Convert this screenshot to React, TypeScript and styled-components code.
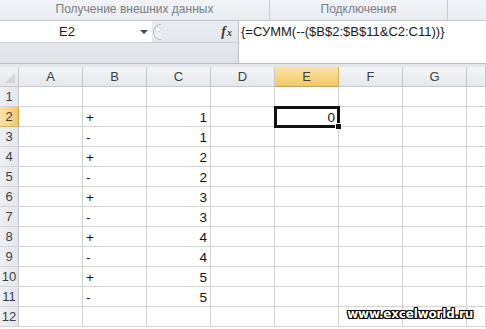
import React from "react";
import styled, { createGlobalStyle } from "styled-components";

const GlobalStyle = createGlobalStyle`
    html, body {
        margin: 0;
        padding: 0;
        background: #ffffff;
        overflow: hidden;
    }
    body {
        font-family: "Liberation Sans", Arial, sans-serif;
    }
`;

const Page = styled.div`
    position: relative;
    width: 486px;
    height: 329px;
    overflow: hidden;
    background: #e8ebef;
    display: flex;
    flex-direction: column;
`;

const Ribbon = styled.div`
    display: grid;
    grid-template-columns: 270px 178px 1fr;
    height: 21px;
    background: linear-gradient(#f1f3f6, #e9ecf1);
    border-bottom: 1px solid #c2c7ce;
    box-sizing: border-box;
`;

const RibbonGroup = styled.div<{ $last?: boolean }>`
    display: flex;
    align-items: center;
    justify-content: center;
    font-size: 12px;
    color: #7a7e84;
    border-right: ${p => (p.$last ? "none" : "1px solid #c8ccd2")};
    padding-bottom: 2px;
`;

const FormulaBar = styled.div`
    display: grid;
    grid-template-columns: 239px 1fr;
    height: 43px;
    border-bottom: 1px solid #b9bec6;
    box-sizing: border-box;
`;

const LeftBar = styled.div`
    display: flex;
    flex-direction: column;
    background: linear-gradient(#e9ecf0, #dfe3e8);
    border-right: 1px solid #b9bec6;
`;

const NameRow = styled.div`
    display: flex;
    align-items: center;
    height: 21px;
    border-bottom: 1px solid #c9cdd3;
`;

const NameBox = styled.div`
    position: relative;
    width: 152px;
    height: 100%;
    background: #ffffff;
    display: flex;
    align-items: center;
    justify-content: center;
    font-size: 13px;
    color: #222;
    padding-right: 18px;
    box-sizing: border-box;
`;

const DropArrow = styled.span`
    position: absolute;
    right: 4px;
    top: 9px;
    width: 0;
    height: 0;
    border-left: 4px solid transparent;
    border-right: 4px solid transparent;
    border-top: 4px solid #444;
`;

const Grip = styled.div`
    width: 12px;
    height: 20px;
    margin-left: -2px;
    display: flex;
    align-items: center;
`;

const FxArea = styled.div`
    flex: 1;
    display: flex;
    align-items: baseline;
    justify-content: flex-end;
    padding-right: 6px;
    font-family: "Liberation Serif", serif;
    font-style: italic;
    font-weight: bold;
    font-size: 14px;
    color: #3a3a3a;
`;

const FxSub = styled.span`
    font-size: 10px;
    margin-left: 1px;
`;

const FormulaBox = styled.div`
    background: #ffffff;
    font-size: 13px;
    color: #1a1a1a;
    padding: 3px 0 0 2px;
    white-space: nowrap;
`;

const Gap = styled.div`
    height: 3px;
    background: #e3e6ea;
`;

const Sheet = styled.div`
    position: relative;
    display: grid;
    grid-template-columns: 19px repeat(7, 64px) 1fr;
    grid-auto-rows: 20px;
    background: #ffffff;
    flex: 1;
`;

const Corner = styled.div`
    position: relative;
    background: linear-gradient(#f3f4f6, #e3e6ea);
    border-right: 1px solid #c5c9cf;
    border-bottom: 1px solid #c5c9cf;
    box-sizing: border-box;
    &::after {
        content: "";
        position: absolute;
        right: 3px;
        bottom: 3px;
        width: 0;
        height: 0;
        border-left: 10px solid transparent;
        border-bottom: 10px solid #d2d5da;
    }
`;

const ColHead = styled.div<{ $active?: boolean }>`
    display: flex;
    align-items: center;
    justify-content: center;
    font-size: 13px;
    color: #3b3f45;
    background: ${p =>
        p.$active
            ? "linear-gradient(#fbe3a8, #f3c965)"
            : "linear-gradient(#f5f6f8, #e4e7eb)"};
    border-right: 1px solid ${p => (p.$active ? "#d4b15a" : "#c5c9cf")};
    border-bottom: 1px solid ${p => (p.$active ? "#c9a34b" : "#c5c9cf")};
    box-sizing: border-box;
`;

const RowHead = styled.div<{ $active?: boolean }>`
    display: flex;
    align-items: center;
    justify-content: center;
    font-size: 13px;
    color: #3b3f45;
    background: ${p =>
        p.$active
            ? "linear-gradient(90deg, #fbe3a8, #f3c965)"
            : "linear-gradient(90deg, #eef0f3, #e4e7eb)"};
    border-right: 1px solid ${p => (p.$active ? "#c9a34b" : "#c5c9cf")};
    border-bottom: 1px solid ${p => (p.$active ? "#d4b15a" : "#d2d5da")};
    box-sizing: border-box;
`;

const Cell = styled.div<{ $align?: "left" | "right"; $selected?: boolean }>`
    position: relative;
    display: flex;
    align-items: flex-end;
    justify-content: ${p => (p.$align === "right" ? "flex-end" : "flex-start")};
    padding: 0 3px 1px;
    font-size: 13.5px;
    color: #111;
    border-right: 1px solid #d4d4d4;
    border-bottom: 1px solid #d4d4d4;
    box-sizing: border-box;
    ${p =>
        p.$selected &&
        `
        outline: 3px solid #111;
        outline-offset: -2px;
        z-index: 2;
        &::after {
            content: "";
            position: absolute;
            right: -4px;
            bottom: -4px;
            width: 5px;
            height: 5px;
            background: #111;
            border: 1px solid #fff;
        }
    `}
`;

const Watermark = styled.div`
    position: absolute;
    right: 13px;
    bottom: 8px;
    font-family: "DejaVu Sans", sans-serif;
    font-weight: bold;
    font-size: 12px;
    color: #ffffff;
    letter-spacing: -0.2px;
    text-shadow:
        1px 0 0 #000, -1px 0 0 #000, 0 1px 0 #000, 0 -1px 0 #000,
        1px 1px 0 #000, -1px -1px 0 #000, 1px -1px 0 #000, -1px 1px 0 #000;
`;

const columns = ["A", "B", "C", "D", "E", "F", "G", ""];

const data: Record<number, [string, string]> = {
    2: ["+", "1"],
    3: ["-", "1"],
    4: ["+", "2"],
    5: ["-", "2"],
    6: ["+", "3"],
    7: ["-", "3"],
    8: ["+", "4"],
    9: ["-", "4"],
    10: ["+", "5"],
    11: ["-", "5"],
};

const GripIcon = () => (
    <svg width="14" height="20" viewBox="0 0 14 20">
        <path d="M13 1 A9 9 0 0 0 13 19" fill="#eef0f3" stroke="#a9aeb6" />
        <circle cx="9" cy="7" r="3" fill="#ffffff" stroke="#c4c8ce" />
    </svg>
);

export default function App() {
    const rows = Array.from({ length: 12 }, (_, i) => i + 1);

    return (
        <Page>
            <GlobalStyle />
            <Ribbon>
                <RibbonGroup>Получение внешних данных</RibbonGroup>
                <RibbonGroup>Подключения</RibbonGroup>
                <RibbonGroup $last />
            </Ribbon>
            <FormulaBar>
                <LeftBar>
                    <NameRow>
                        <NameBox>
                            E2
                            <DropArrow />
                        </NameBox>
                        <Grip>
                            <GripIcon />
                        </Grip>
                        <FxArea>
                            f<FxSub>x</FxSub>
                        </FxArea>
                    </NameRow>
                </LeftBar>
                <FormulaBox>{"{=СУММ(--($B$2:$B$11&C2:C11))}"}</FormulaBox>
            </FormulaBar>
            <Gap />
            <Sheet>
                <Corner />
                {columns.map((c, i) => (
                    <ColHead key={i} $active={c === "E"}>
                        {c}
                    </ColHead>
                ))}
                {rows.map(r => (
                    <React.Fragment key={r}>
                        <RowHead $active={r === 2}>{r}</RowHead>
                        {columns.map((c, i) => {
                            const entry = data[r];
                            let text = "";
                            let align: "left" | "right" = "left";
                            if (entry && c === "B") text = entry[0];
                            if (entry && c === "C") {
                                text = entry[1];
                                align = "right";
                            }
                            const selected = r === 2 && c === "E";
                            if (selected) {
                                text = "0";
                                align = "right";
                            }
                            return (
                                <Cell key={i} $align={align} $selected={selected}>
                                    {text}
                                </Cell>
                            );
                        })}
                    </React.Fragment>
                ))}
                <Watermark>www.excelworld.ru</Watermark>
            </Sheet>
        </Page>
    );
}
